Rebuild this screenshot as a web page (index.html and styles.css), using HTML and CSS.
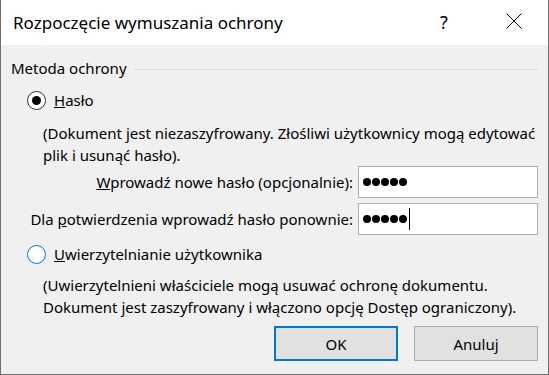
FILE: index.html
```html
<!DOCTYPE html>
<html lang="pl">
<head>
    <meta charset="UTF-8">
    <meta name="viewport" content="width=device-width, initial-scale=1.0">
    <title>Rozpoczęcie wymuszania ochrony</title>
    <link rel="stylesheet" href="styles.css">
</head>
<body>
    <div class="dialog">
        <header class="titlebar">
            <span class="title">Rozpoczęcie wymuszania ochrony</span>
            <span class="help">?</span>
            <span class="close">
                <svg width="16" height="16" viewBox="0 0 16 16">
                    <path d="M0.5 0.5 L15.5 15.5 M15.5 0.5 L0.5 15.5" stroke="#000" stroke-width="1" fill="none"/>
                </svg>
            </span>
        </header>

        <div class="content">
            <div class="group-head">
                <span>Metoda ochrony</span>
                <span class="rule"></span>
            </div>

            <div class="option option-first">
                <span class="radio checked"></span>
                <span><u>H</u>asło</span>
            </div>
            <p class="note">(Dokument jest niezaszyfrowany. Złośliwi użytkownicy mogą edytować plik i usunąć hasło).</p>

            <div class="fields">
                <span class="field-label"><u>W</u>prowadź nowe hasło (opcjonalnie):</span>
                <div class="pw">
                    <span class="dot"></span><span class="dot"></span><span class="dot"></span><span class="dot"></span><span class="dot"></span>
                </div>
                <span class="field-label">Dla <u>p</u>otwierdzenia wprowadź hasło ponownie:</span>
                <div class="pw">
                    <span class="dot"></span><span class="dot"></span><span class="dot"></span><span class="dot"></span><span class="dot"></span>
                    <span class="caret"></span>
                </div>
            </div>

            <div class="option option-second">
                <span class="radio hover"></span>
                <span><u>U</u>wierzytelnianie użytkownika</span>
            </div>
            <p class="note note-second">(Uwierzytelnieni właściciele mogą usuwać ochronę dokumentu.<br>Dokument jest zaszyfrowany i włączono opcję Dostęp ograniczony).</p>

            <div class="buttons">
                <button class="btn default">OK</button>
                <button class="btn">Anuluj</button>
            </div>
        </div>
    </div>
</body>
</html>
```

FILE: styles.css
```css
* {
    box-sizing: border-box;
}

body {
    margin: 0;
    font-family: "Segoe UI", "Noto Sans", sans-serif;
    font-size: 15px;
    color: #000;
    background: #f0f0f0;
}

.dialog {
    width: 549px;
    height: 375px;
    border: 1px solid #707070;
    border-top: none;
    background: #f0f0f0;
    overflow: hidden;
}

.titlebar {
    height: 45px;
    background: #fff;
    display: flex;
    align-items: center;
    padding-left: 12px;
}

.title {
    font-size: 17px;
    flex: 1;
    padding-bottom: 1px;
}

.help {
    font-size: 18px;
    width: 66px;
    padding-bottom: 1px;
}

.close {
    width: 42px;
    display: flex;
    padding-bottom: 3px;
}

.content {
    padding: 0 10px 0 10px;
}

.group-head {
    display: flex;
    align-items: center;
    line-height: 22px;
    margin-top: 12px;
}

.rule {
    flex: 1;
    height: 1px;
    background: #dcdcdc;
    margin-left: 7px;
    margin-top: 2px;
}

.option {
    display: flex;
    align-items: center;
    line-height: 22px;
    padding-left: 16px;
}

.option-first {
    margin-top: 10px;
}

.option-second {
    margin-top: 8px;
}

.radio {
    width: 19px;
    height: 19px;
    border-radius: 50%;
    border: 1px solid #333;
    background: #fff;
    margin-right: 8px;
    display: flex;
    align-items: center;
    justify-content: center;
}

.radio.checked::after {
    content: "";
    width: 9px;
    height: 9px;
    border-radius: 50%;
    background: #000;
}

.radio.hover {
    border-color: #0078d7;
}

.note {
    margin: 11px 0 0 32px;
    line-height: 22px;
}

.note-second {
    margin-top: 9px;
}

.fields {
    display: grid;
    grid-template-columns: 1fr 180px;
    column-gap: 5px;
    row-gap: 5px;
    align-items: center;
}

.field-label {
    text-align: right;
}

.pw {
    height: 32px;
    background: #fff;
    border: 1px solid #adadad;
    display: flex;
    align-items: center;
    gap: 1px;
    padding-left: 4px;
}

.dot {
    width: 8px;
    height: 8px;
    border-radius: 50%;
    background: #000;
}

.caret {
    width: 1px;
    height: 22px;
    background: #000;
    margin-left: 1px;
}

.buttons {
    display: flex;
    justify-content: flex-end;
    gap: 16px;
    margin-top: 8px;
}

.btn {
    width: 124px;
    height: 35px;
    font-family: inherit;
    font-size: 15px;
    color: #000;
    background: #e1e1e1;
    border: 1px solid #adadad;
    border-radius: 0;
    padding: 0;
}

.btn.default {
    border: 2px solid #0078d7;
}
```
